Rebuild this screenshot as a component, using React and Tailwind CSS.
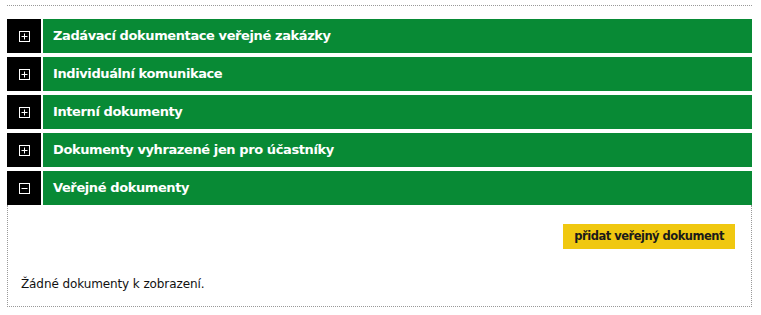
import React from "react";

const sections = [
  { title: "Zadávací dokumentace veřejné zakázky", open: false },
  { title: "Individuální komunikace", open: false },
  { title: "Interní dokumenty", open: false },
  { title: "Dokumenty vyhrazené jen pro účastníky", open: false },
  { title: "Veřejné dokumenty", open: true },
];

function ToggleIcon({ open }) {
  return (
    <svg width="11" height="11" viewBox="0 0 11 11" className="block">
      <rect x="0.5" y="0.5" width="10" height="10" fill="none" stroke="#fff" strokeWidth="1" />
      <line x1="2.5" y1="5.5" x2="8.5" y2="5.5" stroke="#fff" strokeWidth="1" />
      {!open && <line x1="5.5" y1="2.5" x2="5.5" y2="8.5" stroke="#fff" strokeWidth="1" />}
    </svg>
  );
}

export default function App() {
  return (
    <div
      className="w-[761px] h-[315px] bg-white pl-[7px] pr-[9px] overflow-hidden"
      style={{ fontFamily: "'DejaVu Sans', Verdana, sans-serif" }}
    >
      <div className="h-[6px] border-b border-dotted border-[#999]" />
      <div className="pt-[13px]">
        {sections.map((s) => (
          <div key={s.title} className="mb-[4px] last:mb-0">
            <div className="flex h-[34px]">
              <div className="w-[34px] bg-black flex items-center justify-center">
                <ToggleIcon open={s.open} />
              </div>
              <div className="ml-[2px] flex-1 bg-[#088a35] flex items-center pl-[10px] text-white font-bold text-[13px] tracking-[-0.4px]">
                {s.title}
              </div>
            </div>
            {s.open && (
              <div className="border-x border-b border-dotted border-[#999] h-[102px] flex flex-col">
                <div className="flex justify-end pt-[19px] pr-[16px]">
                  <button className="h-[25px] px-[11px] bg-[#f0c810] text-[#1a1a1a] font-bold text-[11.5px] tracking-[-0.5px]">
                    přidat veřejný dokument
                  </button>
                </div>
                <p className="mt-[26px] pl-[13px] text-[12px] tracking-[-0.1px] text-[#111]">Žádné dokumenty k zobrazení.</p>
              </div>
            )}
          </div>
        ))}
      </div>
    </div>
  );
}
